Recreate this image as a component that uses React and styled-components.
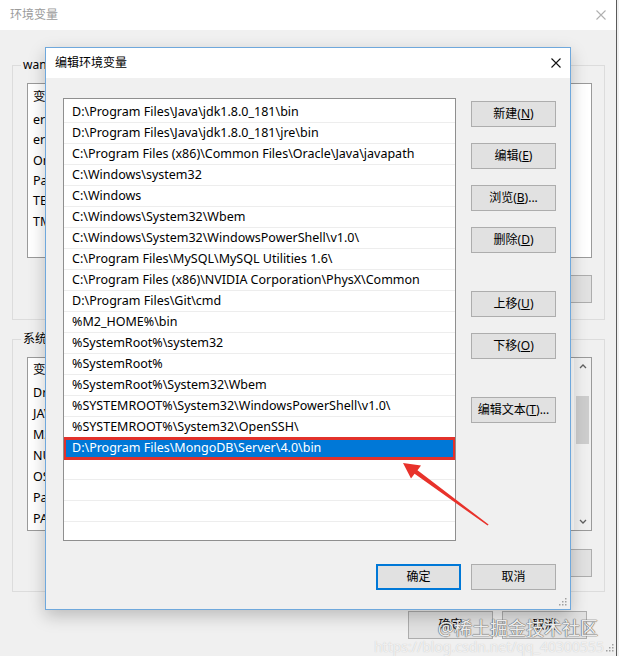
import styled, { createGlobalStyle } from "styled-components";

const GlobalStyle = createGlobalStyle`
  html, body {
    margin: 0;
    padding: 0;
    background: #f0f0f0;
  }
  body {
    font-family: "Noto Sans", "Noto Sans CJK SC", sans-serif;
    font-size: 12px;
    color: #000;
  }
  * { box-sizing: border-box; }
`;

const Page = styled.div`
  position: relative;
  width: 619px;
  height: 656px;
  overflow: hidden;
  background: #f0f0f0;
`;

const Window = styled.div`
  width: 617px;
  height: 656px;
  border-right: 1px solid #5a5a5a;
  background: #f0f0f0;
  display: flex;
  flex-direction: column;
`;

const TitleBar = styled.div`
  height: 30px;
  flex: none;
  background: #fff;
  display: flex;
  align-items: center;
  justify-content: space-between;
  padding: ${p => p.$pad || "0 10px"};
  font-size: 12px;
  line-height: 16px;
  color: ${p => p.$color || "#000"};
`;

const WindowBody = styled.div`
  display: flex;
  flex-direction: column;
  padding: 27px 11px 0 12px;
`;

const Group = styled.fieldset`
  margin: ${p => p.$mt || 0}px 0 0;
  padding: 10px 12px ${p => p.$pb}px 14px;
  border: 1px solid #dcdcdc;
  min-width: 0;
`;

const Legend = styled.legend`
  padding: 0 2px;
  margin-left: -6px;
  font-size: 12px;
  line-height: 16px;
`;

const VarList = styled.div`
  display: flex;
  height: ${p => p.$h}px;
  background: #fff;
  border: 1px solid #9a9a9a;
  overflow: hidden;
`;

const VarColumn = styled.div`
  flex: 1;
  display: flex;
  flex-direction: column;
`;

const VarRow = styled.div`
  height: ${p => p.$h}px;
  flex: none;
  display: flex;
  align-items: center;
  padding-left: 5px;
  font-size: 12.5px;
  line-height: 16px;
  white-space: nowrap;
`;

const ScrollBar = styled.div`
  width: 17px;
  flex: none;
  display: flex;
  flex-direction: column;
  background: #f0f0f0;
`;

const ScrollArrow = styled.div`
  height: 17px;
  display: flex;
  align-items: center;
  justify-content: center;
`;

const ScrollTrack = styled.div`
  flex: 1;
  padding: 21px 2px 0;
`;

const Thumb = styled.div`
  height: 48px;
  background: #cdcdcd;
`;

const ButtonRow = styled.div`
  display: flex;
  justify-content: flex-end;
  gap: ${p => p.$gap || 10}px;
  margin-top: ${p => p.$mt || 0}px;
  padding: ${p => p.$pad || 0};
`;

const Button = styled.button`
  width: 85px;
  height: ${p => p.$h || 26}px;
  flex: none;
  padding: 0;
  margin-top: ${p => p.$mt || 0}px;
  background: #e1e1e1;
  border: 1px solid ${p => (p.$primary ? "#0078d7" : "#adadad")};
  box-shadow: ${p => (p.$primary ? "inset 0 0 0 1px #0078d7" : "none")};
  font-family: inherit;
  font-size: 12px;
  line-height: 16px;
  color: #000;
  white-space: nowrap;
`;

const Dialog = styled.div`
  position: absolute;
  left: 45px;
  top: 47px;
  width: 526px;
  height: 563px;
  border: 1px solid #6fa8dc;
  background: #f0f0f0;
  box-shadow: 0 6px 16px rgba(0, 0, 0, 0.22);
  display: flex;
  flex-direction: column;
`;

const DialogBody = styled.div`
  display: grid;
  grid-template-columns: 393px 85px;
  column-gap: 15px;
  padding: 20px 14px 0 17px;
`;

const PathList = styled.div`
  height: 443px;
  background: #fff;
  border: 1px solid #8f8f8f;
  overflow: hidden;
  padding-top: 3px;
`;

const PathRow = styled.div`
  height: 21px;
  display: flex;
  align-items: center;
  padding-left: 8px;
  border-bottom: 1px solid #ededed;
  font-size: 12.5px;
  line-height: 16px;
  white-space: nowrap;
  background: ${p => (p.$selected ? "#0078d7" : "#fff")};
  color: ${p => (p.$selected ? "#fff" : "#000")};
  outline: ${p => (p.$selected ? "3px solid #e2322b" : "none")};
  outline-offset: -2px;
`;

const SideButtons = styled.div`
  display: flex;
  flex-direction: column;
  gap: 16px;
  padding-top: 3px;
`;

const Grip = styled.svg`
  position: absolute;
  right: ${p => p.$r}px;
  bottom: ${p => p.$b}px;
`;

const Overlay = styled.svg`
  position: absolute;
  left: 0;
  top: 0;
  pointer-events: none;
`;

const Watermark = styled.div`
  position: absolute;
  right: 21px;
  bottom: 1px;
  display: flex;
  flex-direction: column;
  align-items: flex-end;
  pointer-events: none;
`;

const MarkMain = styled.span`
  font-size: 18px;
  line-height: 22px;
  color: rgba(255, 255, 255, 0.9);
  text-shadow: 0 0 1px #666, 0 0 1px #666, 0 0 1px #666;
`;

const MarkUrl = styled.span`
  font-size: 14px;
  line-height: 16px;
  color: rgba(255, 255, 255, 0.75);
  text-shadow: 0 0 1px #bbb;
  margin-right: -6px;
`;

const CloseX = ({ color }) => (
  <svg width="10" height="10" viewBox="0 0 10 10">
    <path d="M0.5 0.5L9.5 9.5M9.5 0.5L0.5 9.5" stroke={color} strokeWidth="1.1" />
  </svg>
);

const Chevron = ({ up }) => (
  <svg width="8" height="5" viewBox="0 0 8 5">
    <path d={up ? "M1 4L4 1L7 4" : "M1 1L4 4L7 1"} stroke="#606060" strokeWidth="1.3" fill="none" />
  </svg>
);

const GripDots = ({ r, b }) => (
  <Grip $r={r} $b={b} width="10" height="10" viewBox="0 0 10 10">
    {[[8, 2], [5, 5], [8, 5], [2, 8], [5, 8], [8, 8]].map(([x, y]) => (
      <rect key={`${x}-${y}`} x={x - 1} y={y - 1} width="1.5" height="1.5" fill="#a0a0a0" />
    ))}
  </Grip>
);

const Label = ({ text, k, tail = "" }) => (
  <>
    {text}(<u>{k}</u>){tail}
  </>
);

// only the left edge of these lists shows beside the dialog
const userVars = ["变量", "erlang_home", "erlang_bin", "OneDrive", "Path", "TEMP", "TMP"];
const sysVars = ["变量", "DriverData", "JAVA_HOME", "M2_HOME", "NUMBER", "OS", "Path", "PATHEXT"];

const paths = [
  "D:\\Program Files\\Java\\jdk1.8.0_181\\bin",
  "D:\\Program Files\\Java\\jdk1.8.0_181\\jre\\bin",
  "C:\\Program Files (x86)\\Common Files\\Oracle\\Java\\javapath",
  "C:\\Windows\\system32",
  "C:\\Windows",
  "C:\\Windows\\System32\\Wbem",
  "C:\\Windows\\System32\\WindowsPowerShell\\v1.0\\",
  "C:\\Program Files\\MySQL\\MySQL Utilities 1.6\\",
  "C:\\Program Files (x86)\\NVIDIA Corporation\\PhysX\\Common",
  "D:\\Program Files\\Git\\cmd",
  "%M2_HOME%\\bin",
  "%SystemRoot%\\system32",
  "%SystemRoot%",
  "%SystemRoot%\\System32\\Wbem",
  "%SYSTEMROOT%\\System32\\WindowsPowerShell\\v1.0\\",
  "%SYSTEMROOT%\\System32\\OpenSSH\\",
  "D:\\Program Files\\MongoDB\\Server\\4.0\\bin",
  "",
  "",
  "",
  "",
];

const SELECTED = 16;

const App = () => {
  return (
    <Page>
      <GlobalStyle />
      <Window>
        <TitleBar $color="#9b9b9b">
          <span>环境变量</span>
          <CloseX color="#b0b0b0" />
        </TitleBar>
        <WindowBody>
          <Group $pb={16}>
            <Legend>wang</Legend>
            <VarList $h={175}>
              <VarColumn>
                {userVars.map((name, i) => (
                  <VarRow key={name} $h={i === 0 ? 26 : 20.3}>{name}</VarRow>
                ))}
              </VarColumn>
            </VarList>
            <ButtonRow $mt={17}>
              <Button $h={28}><Label text="删除" k="L" /></Button>
            </ButtonRow>
          </Group>
          <Group $mt={11} $pb={14}>
            <Legend>系统变量</Legend>
            <VarList $h={174}>
              <VarColumn>
                {sysVars.map((name, i) => (
                  <VarRow key={name} $h={i === 0 ? 24 : 21}>{name}</VarRow>
                ))}
              </VarColumn>
              <ScrollBar>
                <ScrollArrow><Chevron up /></ScrollArrow>
                <ScrollTrack><Thumb /></ScrollTrack>
                <ScrollArrow><Chevron /></ScrollArrow>
              </ScrollBar>
            </VarList>
            <ButtonRow $mt={18}>
              <Button $h={28}><Label text="删除" k="L" /></Button>
            </ButtonRow>
          </Group>
        </WindowBody>
        <ButtonRow $gap={9} $pad="19px 29px 0 0">
          <Button $h={28}>确定</Button>
          <Button $h={28}>取消</Button>
        </ButtonRow>
      </Window>
      <GripDots r={4} b={3} />

      <Dialog>
        <TitleBar $pad="0 9px 0 9px">
          <span>编辑环境变量</span>
          <CloseX color="#111" />
        </TitleBar>
        <DialogBody>
          <PathList>
            {paths.map((p, i) => (
              <PathRow key={i} $selected={i === SELECTED}>
                {p}
              </PathRow>
            ))}
          </PathList>
          <SideButtons>
            <Button><Label text="新建" k="N" /></Button>
            <Button><Label text="编辑" k="E" /></Button>
            <Button><Label text="浏览" k="B" tail="..." /></Button>
            <Button><Label text="删除" k="D" /></Button>
            <Button $mt={22}><Label text="上移" k="U" /></Button>
            <Button><Label text="下移" k="O" /></Button>
            <Button $mt={22}><Label text="编辑文本" k="T" tail="..." /></Button>
          </SideButtons>
        </DialogBody>
        <ButtonRow $gap={10} $pad="23px 14px 0 0">
          <Button $primary>确定</Button>
          <Button>取消</Button>
        </ButtonRow>
        <GripDots r={2} b={2} />
      </Dialog>

      <Overlay width="619" height="656" viewBox="0 0 619 656">
        <polygon
          points="403,463 421,465.5 417.5,470.2 488.6,524.6 487.6,525.6 414.6,473.8 411,478.5"
          fill="#e8322b"
        />
      </Overlay>

      <Watermark>
        <MarkMain>@稀土掘金技术社区</MarkMain>
        <MarkUrl>https://blog.csdn.net/qq_40300555</MarkUrl>
      </Watermark>
    </Page>
  );
};

export default App;
